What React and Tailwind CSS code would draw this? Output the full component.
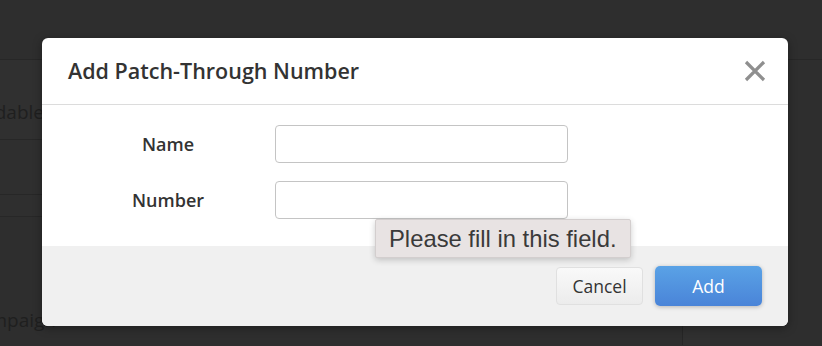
import React from 'react';

const PatchThroughModal = () => {
  return (
    <div className="absolute left-[42px] top-[38px] w-[746px] rounded-[6px] bg-white overflow-hidden shadow-[0_2px_10px_rgba(0,0,0,0.35)]">
      <div className="flex items-center justify-between h-[67px] pl-[26px] pr-[22px] border-b border-[#dcdcdc]">
        <h4 className="text-[21.5px] font-semibold text-[#333]">Add Patch-Through Number</h4>
        <button className="w-[22px] h-[22px] flex items-center justify-center">
          <svg width="22" height="22" viewBox="0 0 22 22">
            <path d="M2 2 L20 20 M20 2 L2 20" stroke="#8f8f8f" strokeWidth="3.2" strokeLinecap="butt" />
          </svg>
        </button>
      </div>
      <div className="pt-[20px] pb-[27px] pl-[26px]">
        <div className="grid grid-cols-[200px_293px] gap-x-[7px] gap-y-[18px] items-center">
          <label className="text-center text-[18px] font-semibold text-[#333]">Name</label>
          <input className="h-[38px] rounded-[4px] border border-[#c4c4c4] bg-white outline-none" />
          <label className="text-center text-[18px] font-semibold text-[#333]">Number</label>
          <input className="h-[38px] rounded-[4px] border border-[#c4c4c4] bg-white outline-none" />
        </div>
      </div>
      <div className="flex justify-end items-center gap-[12px] h-[80px] pr-[26px] bg-[#f0f0f0]">
        <button className="w-[87px] h-[38px] rounded-[4px] border border-[#e0e0e0] bg-gradient-to-b from-[#f9f9f9] to-[#ececec] text-[17.5px] text-[#333]">
          Cancel
        </button>
        <button className="w-[107px] h-[40px] rounded-[5px] bg-gradient-to-b from-[#5aa2e6] to-[#4a84d8] text-[17.5px] text-white shadow-[0_1px_4px_rgba(0,0,0,0.25)]">
          Add
        </button>
      </div>
      {/* browser validation bubble */}
      <div className="absolute left-[333px] top-[181px] h-[39px] px-[13px] flex items-center bg-[#e8e3e3] border border-[#d3cece] rounded-[2px] shadow-[0_2px_6px_rgba(0,0,0,0.2)] text-[23.8px] text-[#3a3a3a] whitespace-nowrap [font-family:'Liberation_Sans',Arial,sans-serif]">
        Please fill in this field.
      </div>
    </div>
  );
};

export default function App() {
  return (
    <div className="relative w-[822px] h-[346px] overflow-hidden bg-[#2e2e2e] [font-family:'Open_Sans',sans-serif]">
      <div className="h-[60px] border-b border-[#272727]" />
      <div className="flex">
        <div className="w-[683px] border-r border-[#262626]">
          <div className="h-[80px] border-b border-[#272727] bg-[#303030] pt-[38px]">
            <div className="w-[44px] flex justify-end">
              <span className="whitespace-nowrap text-[19px] leading-[28px] text-[#1f1f1f]">Downloadable</span>
            </div>
          </div>
          <div className="h-[55px] border-b border-[#272727] bg-[#2f2f2f]" />
          <div className="h-[22px] border-b border-[#272727] bg-[#2f2f2f]" />
          <div className="h-[128px] pt-[89px] bg-[#2e2e2e]">
            <div className="w-[56px] flex justify-end">
              <span className="whitespace-nowrap text-[19px] leading-[28px] text-[#1f1f1f]">Campaign</span>
            </div>
          </div>
        </div>
        <div className="w-[27px] bg-[#303030]" />
      </div>
      <PatchThroughModal />
    </div>
  );
}
